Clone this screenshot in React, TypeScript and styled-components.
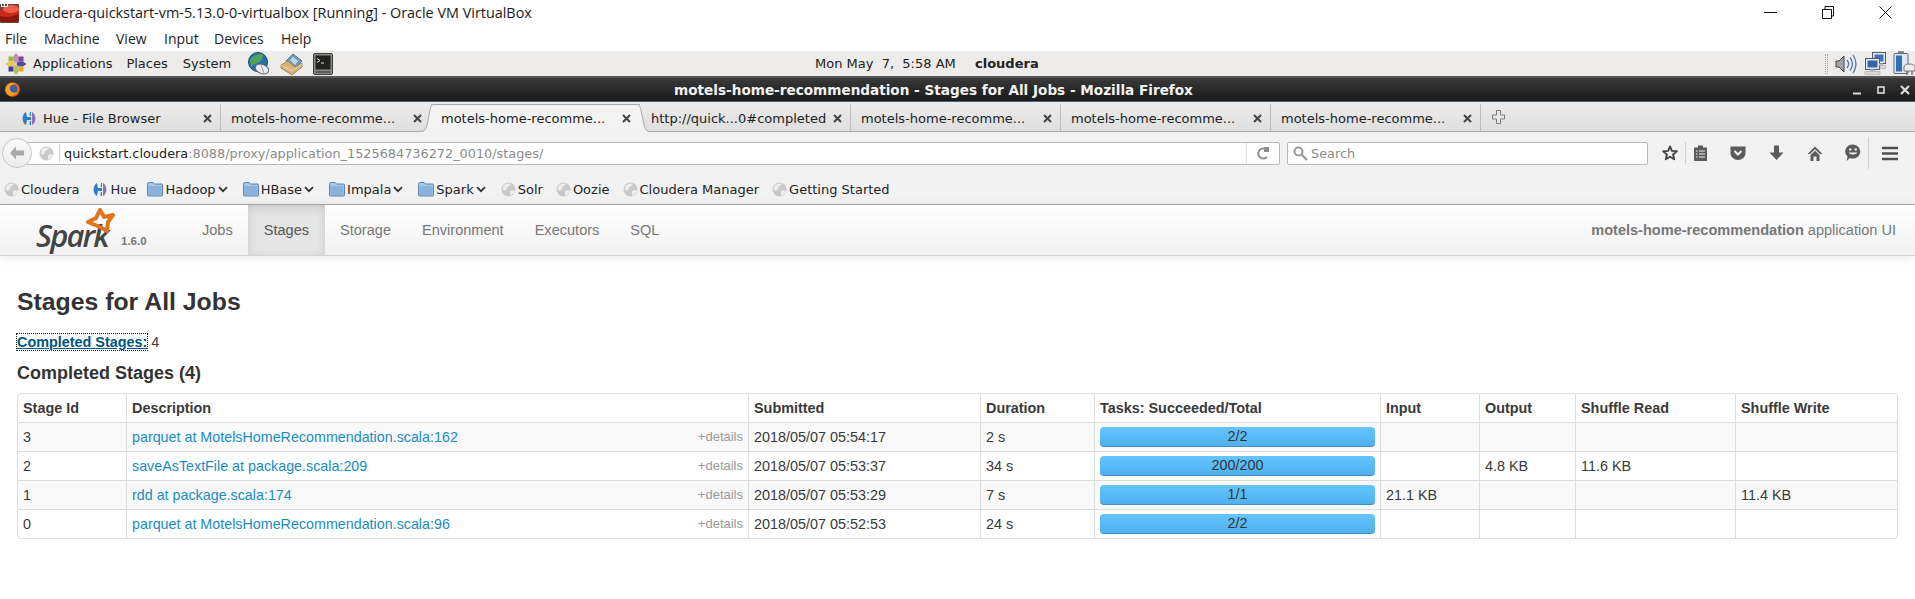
import React from 'react';
import styled, { createGlobalStyle } from 'styled-components';

const GlobalStyle = createGlobalStyle`
  html, body {
    margin: 0;
    padding: 0;
    background: #fff;
  }
`;

const Screen = styled.div`
  width: 1915px;
  height: 599px;
  overflow: hidden;
  display: flex;
  flex-direction: column;
  background: #fff;
`;

/* ---------- VirtualBox host window ---------- */

const HostTitle = styled.div`
  height: 25px;
  display: flex;
  align-items: center;
  font: 14.4px 'Open Sans', sans-serif;
  color: #1a1a1a;
`;

const HostTitleText = styled.span`
  margin-left: 5px;
  flex: 1;
`;

const HostControls = styled.div`
  display: flex;
  align-items: center;
  gap: 45px;
  margin-right: 23px;
`;

const HostMenu = styled.div`
  height: 26px;
  display: flex;
  align-items: center;
  padding-left: 5px;
  font: 14px 'Open Sans', sans-serif;
  color: #222;
`;

const HostMenuItem = styled.span<{ $w: number }>`
  width: ${(p) => p.$w}px;
`;

/* ---------- guest panel ---------- */

const Panel = styled.div`
  height: 25px;
  background: #edecea;
  display: flex;
  align-items: center;
  padding-left: 5px;
  font: 13px 'DejaVu Sans', sans-serif;
  color: #222;
`;

const PanelLeft = styled.div`
  width: 810px;
  display: flex;
  align-items: center;
`;

const PanelLabel = styled.span<{ $ml: number }>`
  margin-left: ${(p) => p.$ml}px;
`;

const PanelIcon = styled.span<{ $ml: number }>`
  margin-left: ${(p) => p.$ml}px;
  display: flex;
`;

const Clock = styled.span`
  white-space: pre;
  width: 160px;
`;

const PanelUser = styled.span`
  font-weight: bold;
  flex: 1;
`;

const Tray = styled.div`
  display: flex;
  align-items: center;
  gap: 7px;
`;

const TrayDots = styled.span`
  width: 3px;
  height: 20px;
  border-left: 1px dotted #aaa;
  border-right: 1px dotted #aaa;
  box-sizing: border-box;
`;

/* ---------- Firefox window ---------- */

const FxTitle = styled.div`
  height: 26px;
  box-sizing: border-box;
  border-top: 2px solid #555;
  border-bottom: 1px solid #4a6378;
  background: linear-gradient(#3a3a3a, #2c2c2c 40%, #1a1a1a);
  display: flex;
  align-items: center;
  padding: 0 5px;
  color: #f2f2f2;
  font: bold 13.6px 'DejaVu Sans', sans-serif;
`;

const FxTitleText = styled.span`
  flex: 1;
  text-align: center;
  margin-left: 19px;
  padding-right: 24px;
`;

const FxControls = styled.div`
  display: flex;
  align-items: center;
  gap: 14px;
`;

const TabBar = styled.div`
  height: 30px;
  box-sizing: border-box;
  background: linear-gradient(#ececec, #dfdfdf);
  border-bottom: 1px solid #a9a9a9;
  display: flex;
  padding: 2px 0 0 11px;
  font: 13px 'DejaVu Sans', sans-serif;
  color: #222;
`;

const Tab = styled.div<{ $active?: boolean; $noSep?: boolean }>`
  position: relative;
  width: 210px;
  height: ${(p) => (p.$active ? 28 : 27)}px;
  box-sizing: border-box;
  display: flex;
  align-items: center;
  padding: 1px ${(p) => (p.$active ? 9 : 8)}px 0 10px;
  border-right: 1px solid ${(p) => (p.$noSep ? 'transparent' : '#bdbdbd')};
  background: ${(p) => (p.$active ? '#f3f3f3' : 'transparent')};
  box-shadow: ${(p) => (p.$active ? 'inset 0 1px 0 #a9a9a9' : 'none')};
`;

const TabIcon = styled.span`
  display: flex;
  margin-right: 6px;
`;

const TabText = styled.span`
  flex: 1;
  white-space: nowrap;
  overflow: hidden;
`;

const TabCurve = styled.svg<{ $side: 'left' | 'right' }>`
  position: absolute;
  top: 0;
  ${(p) => (p.$side === 'left' ? 'left: -11px;' : 'right: -11px;')}
`;

const NewTab = styled.span`
  display: flex;
  align-items: center;
  margin: -2px 0 0 11px;
`;

const NavBar = styled.div`
  height: 37px;
  box-sizing: border-box;
  padding-top: 5px;
  background: #f2f2f2;
  display: flex;
  align-items: center;
  font: 12.85px 'DejaVu Sans', sans-serif;
`;

const BackButton = styled.div`
  position: relative;
  z-index: 1;
  width: 30px;
  height: 30px;
  margin-left: 2px;
  box-sizing: border-box;
  border: 1px solid #c4c4c4;
  border-radius: 50%;
  background: linear-gradient(#fbfbfb, #ececec);
  display: flex;
  align-items: center;
  justify-content: center;
`;

const UrlBox = styled.div`
  width: 1254px;
  height: 23px;
  margin-left: -6px;
  box-sizing: border-box;
  border: 1px solid #b8b8b8;
  border-radius: 0 2px 2px 0;
  background: #fff;
  display: flex;
  align-items: center;
  padding-left: 12px;
`;

const UrlDivider = styled.span`
  width: 1px;
  height: 18px;
  background: #cfcfcf;
  margin: 0 4px 0 5px;
`;

const UrlHost = styled.span`
  color: #222;
`;

const UrlRest = styled.span`
  color: #8a8a8a;
  flex: 1;
`;

const ReloadCell = styled.span`
  height: 100%;
  width: 33px;
  box-sizing: border-box;
  border-left: 1px solid #e4e4e4;
  display: flex;
  align-items: center;
  justify-content: center;
`;

const SearchBox = styled.div`
  width: 361px;
  height: 23px;
  margin-left: 7px;
  box-sizing: border-box;
  border: 1px solid #b8b8b8;
  border-radius: 2px;
  background: #fff;
  display: flex;
  align-items: center;
  gap: 3px;
  padding-left: 5px;
  color: #8a8a8a;
`;

const NavIcons = styled.div`
  display: flex;
  align-items: center;
  margin-left: 14px;
`;

const NavIcon = styled.span<{ $w: number; $ml?: number }>`
  width: ${(p) => p.$w}px;
  margin-left: ${(p) => p.$ml ?? 0}px;
  display: flex;
  justify-content: flex-start;
`;

const NavDivider = styled.span<{ $h: number; $mx: number }>`
  width: 1px;
  height: ${(p) => p.$h}px;
  margin: 0 ${(p) => p.$mx}px;
  background: #d0d0d0;
`;

const Bookmarks = styled.div`
  height: 36px;
  box-sizing: border-box;
  background: #f2f2f2;
  border-bottom: 1px solid #a9a9a9;
  display: flex;
  align-items: center;
  padding: 5px 0 0 4px;
  font: 13px 'DejaVu Sans', sans-serif;
  color: #222;
  gap: 13px;
`;

const Bookmark = styled.span`
  display: flex;
  align-items: center;
  gap: 2px;
`;

const FolderBookmark = styled(Bookmark)<{ $ml: number }>`
  margin-left: ${(p) => p.$ml}px;
  margin-right: 2px;
`;

/* ---------- Spark UI ---------- */

const SparkNav = styled.div`
  height: 51px;
  box-sizing: border-box;
  background: linear-gradient(#ffffff, #f2f2f2);
  border-bottom: 1px solid #d4d4d4;
  box-shadow: 0 1px 10px rgba(0, 0, 0, 0.1);
  display: flex;
  align-items: stretch;
  font: 14.55px 'Liberation Sans', Arial, sans-serif;
  color: #777;
`;

const Brand = styled.div`
  width: 186.5px;
  display: flex;
  align-items: flex-start;
  padding-left: 36px;
  box-sizing: border-box;
`;

const BrandLogo = styled.div`
  position: relative;
  width: 85px;
  height: 51px;
`;

const BrandWord = styled.span`
  position: absolute;
  left: 0;
  top: 11px;
  font: italic 600 31px/38px 'Open Sans', sans-serif;
  letter-spacing: -1.9px;
  color: #444;
`;

const BrandStar = styled.svg`
  position: absolute;
  left: 49px;
  top: 3px;
`;

const BrandVersion = styled.span`
  margin-top: 29px;
  font: bold 11.5px/14px 'Liberation Sans', Arial, sans-serif;
  color: #777;
`;

const NavLink = styled.a<{ $active?: boolean }>`
  padding: 0 15.5px;
  display: flex;
  align-items: center;
  color: ${(p) => (p.$active ? '#555' : '#777')};
  background: ${(p) => (p.$active ? '#e5e5e5' : 'transparent')};
  box-shadow: ${(p) => (p.$active ? 'inset 0 3px 8px rgba(0, 0, 0, 0.125)' : 'none')};
`;

const AppLabel = styled.div`
  margin-left: auto;
  margin-right: 19px;
  display: flex;
  align-items: center;
  white-space: pre;
`;

const AppName = styled.strong`
  font-weight: bold;
`;

const Content = styled.div`
  padding: 26px 19px 0 17px;
  font: 14.4px/20px 'Liberation Sans', Arial, sans-serif;
  color: #3a3a3a;
`;

const PageTitle = styled.h3`
  margin: 0;
  font: bold 24.8px/40px 'Liberation Sans', Arial, sans-serif;
  color: #333;
`;

const Summary = styled.div`
  margin-top: 10px;
  height: 20px;
`;

const SummaryLink = styled.a`
  font-weight: bold;
  color: #005580;
  text-decoration: underline;
  outline: 1px dotted #222;
`;

const SectionTitle = styled.h4`
  margin: 11px 0 0;
  font: bold 18px/20px 'Liberation Sans', Arial, sans-serif;
  color: #333;
`;

const StageTable = styled.table`
  width: 1879px;
  margin-top: 10px;
  table-layout: fixed;
  border-collapse: separate;
  border-spacing: 0;
  border: 1px solid #ddd;
  border-radius: 4px;
`;

const Col = styled.col<{ $w: number }>`
  width: ${(p) => p.$w}px;
`;

const Th = styled.th`
  height: 28px;
  box-sizing: border-box;
  padding: 0 5px;
  text-align: left;
  font-weight: bold;
  border-left: 1px solid #ddd;
  &:first-child {
    border-left: 0;
  }
`;

const Row = styled.tr<{ $odd: boolean }>`
  background: ${(p) => (p.$odd ? '#f9f9f9' : 'transparent')};
`;

const Td = styled.td`
  height: 29px;
  box-sizing: border-box;
  padding: 0 5px;
  border-left: 1px solid #ddd;
  border-top: 1px solid #ddd;
  &:first-child {
    border-left: 0;
  }
`;

const DescCell = styled.div`
  display: flex;
  justify-content: space-between;
  align-items: center;
`;

const DescLink = styled.a`
  font-size: 14.3px;
  color: #1a8cc4;
`;

const Details = styled.span`
  font-size: 13px;
  color: #999;
`;

const Bar = styled.div`
  height: 20px;
  box-sizing: border-box;
  border-radius: 4px;
  background: linear-gradient(#64c5ff, #4fb0ef);
  border-bottom: 1px solid #3f8fc6;
  text-align: center;
  line-height: 19px;
  color: #333;
`;

/* ---------- icons ---------- */

const VBoxIcon = () => (
  <svg width="19" height="20" viewBox="0 0 19 20">
    <rect x="0" y="1" width="19" height="19" rx="1" fill="#5a4a48" />
    <path d="M0 8C3 3 9 2 19 2V16C14 19 5 19 0 16Z" fill="#c9281d" />
    <ellipse cx="11" cy="6" rx="8" ry="4" fill="#e8604a" />
    <path d="M0 13C5 15 12 14 19 11V18C13 20 6 20 0 18Z" fill="#8e160e" />
    <rect x="1" y="0" width="7" height="4" fill="#eee" />
    <rect x="2" y="1" width="2" height="2" fill="#555" />
    <rect x="5" y="1" width="2" height="2" fill="#555" />
  </svg>
);

const CentosIcon = () => (
  <svg width="22" height="24" viewBox="0 0 22 24">
    <path d="M11 1L13.5 4V9L11 11.5L8.5 9V4Z" fill="#c08ac0" />
    <rect x="3.5" y="4.5" width="5" height="5" fill="#9bbb3c" />
    <rect x="13.5" y="4.5" width="5" height="5" fill="#8a3f90" />
    <path d="M0.5 12L4 9.5H9L10.5 12L9 14.5H4Z" fill="#efc25a" />
    <path d="M21.5 12L18 9.5H13L11.5 12L13 14.5H18Z" fill="#4f4c9c" />
    <rect x="3.5" y="14.5" width="5" height="5" fill="#3f3d8e" />
    <rect x="13.5" y="14.5" width="5" height="5" fill="#efa724" />
    <path d="M11 23L8.5 20V15L11 12.5L13.5 15V20Z" fill="#a8c45a" />
  </svg>
);

const GlobeMouseIcon = () => (
  <svg width="22" height="24" viewBox="0 0 22 24">
    <circle cx="10" cy="10" r="9.5" fill="#2a6ea8" />
    <path d="M2 8C6 2 11 1 16 3C13 6 15 8 11 10C9 12 6 12 3 15Z" fill="#4fa35a" />
    <circle cx="10" cy="10" r="9.5" fill="none" stroke="#1a4a78" />
    <ellipse cx="14" cy="17" rx="7" ry="4.6" fill="#ecedf0" stroke="#667" transform="rotate(20 14 17)" />
    <path d="M13 13L16 21" stroke="#99a" />
  </svg>
);

const MailIcon = () => (
  <svg width="23" height="24" viewBox="0 0 23 24">
    <path d="M6 9L13 2L22 9L15 17Z" fill="#6f9cc0" stroke="#4c5a66" strokeWidth="0.8" />
    <path d="M10 8L13 5L18 9L15 13Z" fill="#bcd6e6" />
    <path d="M1 13L8 9L15 15L22 11V15L12 23L1 16Z" fill="#d9b37a" stroke="#8f7242" strokeWidth="0.8" />
    <path d="M1 13L12 19L22 12" fill="none" stroke="#efd7ad" />
  </svg>
);

const TerminalIcon = () => (
  <svg width="20" height="22" viewBox="0 0 20 22">
    <rect x="0.5" y="0.5" width="19" height="21" rx="1.5" fill="#8a8c87" stroke="#3d3e3b" />
    <rect x="2.5" y="2.5" width="15" height="14" fill="#20221f" />
    <path d="M4 5.5L7 7.5L4 9.5M8 10H11" stroke="#ddd" fill="none" />
    <rect x="2.5" y="18" width="15" height="2" fill="#5a5b58" />
  </svg>
);

const SpeakerIcon = () => (
  <svg width="22" height="24" viewBox="0 0 22 24">
    <path d="M1 9H4L9 4V20L4 15H1Z" fill="#a4a4a4" stroke="#444" />
    <path d="M12 8C14 10.5 14 13.5 12 16M15 5.5C18 9.5 18 14.5 15 18.5M18 3C22 9 22 15 18 21" fill="none" stroke="#4a78b4" strokeWidth="1.3" />
  </svg>
);

const NetworkIcon = () => (
  <svg width="22" height="25" viewBox="0 0 22 25">
    <rect x="8.5" y="1.5" width="13" height="11" fill="#e6eaf0" stroke="#556" />
    <rect x="10.5" y="3.5" width="9" height="7" fill="#3f72b6" />
    <rect x="1.5" y="7.5" width="14" height="11" fill="#e6eaf0" stroke="#556" />
    <rect x="3.5" y="9.5" width="10" height="7" fill="#2f66ae" />
    <rect x="6" y="18.5" width="5" height="2" fill="#bbb" />
    <rect x="1" y="20.5" width="15" height="3" fill="#d9d9d9" stroke="#999" strokeWidth="0.5" />
    <rect x="15" y="12.5" width="4" height="2" fill="#bbb" />
    <rect x="16" y="14.5" width="6" height="3" fill="#d9d9d9" stroke="#999" strokeWidth="0.5" />
  </svg>
);

const BatteryIcon = () => (
  <svg width="22" height="25" viewBox="0 0 22 25">
    <rect x="5" y="0" width="6" height="3" fill="#888" />
    <rect x="1" y="2.5" width="14" height="20" rx="1" fill="#dfe6ee" stroke="#667" />
    <rect x="3" y="4.5" width="6" height="16" fill="#2f6fb8" />
    <path d="M11 20V16C11 14 13 13 16 13C19 13 22 14 22 16V20Z" fill="#eceef0" stroke="#777" />
    <path d="M14 20V24M19 20V24" stroke="#777" strokeWidth="1.5" />
  </svg>
);

const FirefoxIcon = () => (
  <svg width="15" height="15" viewBox="0 0 15 15">
    <circle cx="7.5" cy="7.5" r="7.3" fill="#e0671a" />
    <circle cx="8" cy="7" r="4.3" fill="#3f5f9e" />
    <path d="M1 5C3 1 8 0 11 2C8 2 6 3 5 5C4 9 8 12 12 10C10 14 5 15 2 12C0 10 0 7 1 5Z" fill="#f3a024" />
  </svg>
);

const HueIcon = () => (
  <svg width="16" height="15" viewBox="0 0 16 15">
    <path d="M5 1C1 3 0 11 5 14L6 9H10V6H6Z" fill="#2f7dc4" />
    <path d="M9 1L8.6 5H10V1Z" fill="#2f7dc4" />
    <path d="M10 14V10H8.8L8.5 14Z" fill="#2f7dc4" />
    <path d="M11 1C15 3 16 11 11 14Z" fill="#8e6fb4" />
  </svg>
);

const GrayGlobe = () => (
  <svg width="15" height="15" viewBox="0 0 15 15">
    <circle cx="7.5" cy="7.5" r="7" fill="#c9c9c9" />
    <path d="M3 3C5 2 8 1 10 2C9 4 7 4 6 6C6 8 4 9 2 8C2 6 2 4 3 3Z" fill="#ededed" />
    <path d="M9 9C11 8 13 8 14 9C13 12 11 13 9 14Z" fill="#ededed" />
  </svg>
);

const FolderIcon = () => (
  <svg width="16" height="16" viewBox="0 0 16 16">
    <path d="M0.5 3.5C0.5 2 1 1.5 2 1.5H6L7.5 3H14.5C15.2 3 15.5 3.4 15.5 4V14C15.5 14.8 15 15 14.5 15H1.5C1 15 0.5 14.8 0.5 14Z" fill="#a6c6e6" stroke="#5b83ad" />
    <rect x="1.5" y="5" width="13" height="9" fill="#8ab2da" />
  </svg>
);

const Chevron = () => (
  <svg width="10" height="7" viewBox="0 0 10 7">
    <path d="M1 1.2L5 5.2L9 1.2" fill="none" stroke="#333" strokeWidth="1.8" />
  </svg>
);

const CloseX = () => (
  <svg width="9" height="9" viewBox="0 0 9 9">
    <path d="M1 1L8 8M8 1L1 8" stroke="#444" strokeWidth="2" />
  </svg>
);

const PlusIcon = () => (
  <svg width="13" height="14" viewBox="0 0 13 14">
    <path d="M4.5 0.5H8.5V5H12.5V9H8.5V13.5H4.5V9H0.5V5H4.5Z" fill="#e8e8e8" stroke="#7a7a7a" />
  </svg>
);

const BackArrow = () => (
  <svg width="16" height="14" viewBox="0 0 16 14">
    <path d="M7 0.5L1 7L7 13.5V9.5H15V4.5H7Z" fill="#a9a9a9" />
  </svg>
);

const ReloadIcon = () => (
  <svg width="12" height="13" viewBox="0 0 12 13">
    <path d="M10 3.2A5 5 0 1 0 10 9.8" fill="none" stroke="#8d8d8d" strokeWidth="2" />
    <path d="M7 0V5H12V0Z" fill="#8d8d8d" />
  </svg>
);

const SearchIcon = () => (
  <svg width="15" height="15" viewBox="0 0 15 15">
    <circle cx="5.5" cy="5.5" r="4" fill="none" stroke="#9a9a9a" strokeWidth="2" />
    <path d="M8.5 8.5L14 14" stroke="#9a9a9a" strokeWidth="2.4" />
  </svg>
);

const StarIcon = () => (
  <svg width="16" height="16" viewBox="0 0 16 16">
    <path d="M8 1.5L9.9 5.9L14.8 6.3L11.1 9.5L12.2 14.3L8 11.8L3.8 14.3L4.9 9.5L1.2 6.3L6.1 5.9Z" fill="none" stroke="#444" strokeWidth="1.9" strokeLinejoin="round" />
  </svg>
);

const ReadingListIcon = () => (
  <svg width="15" height="18" viewBox="0 0 15 18">
    <path d="M1 3.5H5V1.5H10V3.5H14V17H1Z" fill="#5b5b5b" />
    <path d="M3 7H4.5M3 10H4.5M3 13H4.5M6 7H12M6 10H12M6 13H12" stroke="#f2f2f2" strokeWidth="1.2" />
  </svg>
);

const PocketIcon = () => (
  <svg width="16" height="16" viewBox="0 0 16 16">
    <path d="M0.5 1.5H15.5V8C15.5 12 12 15 8 15C4 15 0.5 12 0.5 8Z" fill="#5b5b5b" />
    <path d="M4.5 6L8 9.5L11.5 6" fill="none" stroke="#f2f2f2" strokeWidth="2" />
  </svg>
);

const DownloadIcon = () => (
  <svg width="15" height="16" viewBox="0 0 15 16">
    <path d="M5 0.5H10V7.5H14.5L7.5 15L0.5 7.5H5Z" fill="#5b5b5b" />
  </svg>
);

const HomeIcon = () => (
  <svg width="16" height="15" viewBox="0 0 16 15">
    <path d="M8 0.5L0.5 8H3L8 3.2L13 8H15.5Z" fill="#5b5b5b" />
    <path d="M3.5 9L8 4.8L12.5 9V15H9.5V10.5H6.5V15H3.5Z" fill="#5b5b5b" />
  </svg>
);

const SmileIcon = () => (
  <svg width="16" height="18" viewBox="0 0 16 18">
    <path d="M8 0.5A7.5 7 0 1 1 5 14L1.5 17L2.5 12.5A7.5 7 0 0 1 8 0.5Z" fill="#5b5b5b" />
    <circle cx="5.3" cy="5.5" r="1.2" fill="#f2f2f2" />
    <circle cx="10.7" cy="5.5" r="1.2" fill="#f2f2f2" />
    <path d="M3.8 8.5H12.2C11.5 11 4.5 11 3.8 8.5Z" fill="#f2f2f2" />
  </svg>
);

const MenuIcon = () => (
  <svg width="16" height="15" viewBox="0 0 16 15">
    <path d="M1 2H15M1 7.5H15M1 13H15" stroke="#4d4d4d" strokeWidth="2.6" strokeLinecap="round" />
  </svg>
);

const HostMin = () => (
  <svg width="13" height="12" viewBox="0 0 13 12">
    <path d="M0 5.5H13" stroke="#111" />
  </svg>
);

const HostRestore = () => (
  <svg width="12" height="13" viewBox="0 0 12 13">
    <path d="M0.5 3.5H9.5V12.5H0.5Z M3 3.5V0.5H11.5V10H9.5" fill="none" stroke="#111" />
  </svg>
);

const HostClose = () => (
  <svg width="13" height="13" viewBox="0 0 13 13">
    <path d="M0.5 0.5L12.5 12.5M12.5 0.5L0.5 12.5" stroke="#111" />
  </svg>
);

const WmMin = () => (
  <svg width="10" height="10" viewBox="0 0 10 10">
    <path d="M1 8.5H9" stroke="#ddd" strokeWidth="2" />
  </svg>
);

const WmMax = () => (
  <svg width="10" height="10" viewBox="0 0 10 10">
    <rect x="2" y="2" width="6" height="6" fill="none" stroke="#ddd" strokeWidth="1.6" />
  </svg>
);

const WmClose = () => (
  <svg width="10" height="10" viewBox="0 0 10 10">
    <path d="M1 1L9 9M9 1L1 9" stroke="#ddd" strokeWidth="2.2" />
  </svg>
);

/* ---------- data ---------- */

const tabs = [
  'motels-home-recomme...',
  'motels-home-recomme...',
  'http://quick...0#completed',
  'motels-home-recomme...',
  'motels-home-recomme...',
  'motels-home-recomme...',
];

const columns = [
  { name: 'Stage Id', width: 108 },
  { name: 'Description', width: 622 },
  { name: 'Submitted', width: 232 },
  { name: 'Duration', width: 114 },
  { name: 'Tasks: Succeeded/Total', width: 286 },
  { name: 'Input', width: 99 },
  { name: 'Output', width: 96 },
  { name: 'Shuffle Read', width: 160 },
  { name: 'Shuffle Write', width: 162 },
];

const stages = [
  { id: 3, desc: 'parquet at MotelsHomeRecommendation.scala:162', at: '2018/05/07 05:54:17', dur: '2 s', tasks: '2/2', input: '', output: '', read: '', write: '' },
  { id: 2, desc: 'saveAsTextFile at package.scala:209', at: '2018/05/07 05:53:37', dur: '34 s', tasks: '200/200', input: '', output: '4.8 KB', read: '11.6 KB', write: '' },
  { id: 1, desc: 'rdd at package.scala:174', at: '2018/05/07 05:53:29', dur: '7 s', tasks: '1/1', input: '21.1 KB', output: '', read: '', write: '11.4 KB' },
  { id: 0, desc: 'parquet at MotelsHomeRecommendation.scala:96', at: '2018/05/07 05:52:53', dur: '24 s', tasks: '2/2', input: '', output: '', read: '', write: '' },
];

const navItems = ['Jobs', 'Stages', 'Storage', 'Environment', 'Executors', 'SQL'];

const folders = ['Hadoop', 'HBase', 'Impala', 'Spark'];

export default function App() {
  return (
    <Screen>
      <GlobalStyle />
      <HostTitle>
        <VBoxIcon />
        <HostTitleText>cloudera-quickstart-vm-5.13.0-0-virtualbox [Running] - Oracle VM VirtualBox</HostTitleText>
        <HostControls>
          <HostMin />
          <HostRestore />
          <HostClose />
        </HostControls>
      </HostTitle>
      <HostMenu>
        <HostMenuItem $w={39}>File</HostMenuItem>
        <HostMenuItem $w={72}>Machine</HostMenuItem>
        <HostMenuItem $w={48}>View</HostMenuItem>
        <HostMenuItem $w={50}>Input</HostMenuItem>
        <HostMenuItem $w={67}>Devices</HostMenuItem>
        <HostMenuItem $w={40}>Help</HostMenuItem>
      </HostMenu>

      <Panel>
        <PanelLeft>
          <CentosIcon />
          <PanelLabel $ml={6}>Applications</PanelLabel>
          <PanelLabel $ml={14}>Places</PanelLabel>
          <PanelLabel $ml={15}>System</PanelLabel>
          <PanelIcon $ml={17}>
            <GlobeMouseIcon />
          </PanelIcon>
          <PanelIcon $ml={10}>
            <MailIcon />
          </PanelIcon>
          <PanelIcon $ml={10}>
            <TerminalIcon />
          </PanelIcon>
        </PanelLeft>
        <Clock>{'Mon May  7,  5:58 AM'}</Clock>
        <PanelUser>cloudera</PanelUser>
        <Tray>
          <TrayDots />
          <SpeakerIcon />
          <NetworkIcon />
          <BatteryIcon />
        </Tray>
      </Panel>

      <FxTitle>
        <FirefoxIcon />
        <FxTitleText>motels-home-recommendation - Stages for All Jobs - Mozilla Firefox</FxTitleText>
        <FxControls>
          <WmMin />
          <WmMax />
          <WmClose />
        </FxControls>
      </FxTitle>

      <TabBar>
        <Tab>
          <TabIcon>
            <HueIcon />
          </TabIcon>
          <TabText>Hue - File Browser</TabText>
          <CloseX />
        </Tab>
        {tabs.map((title, i) => (
          <Tab key={i} $active={i === 1} $noSep={i === 0 || i === 1}>
            {i === 1 && (
              <TabCurve $side="left" width="14" height="29" viewBox="0 0 14 29">
                <path d="M0 28C5 28 6 25 7 21L10 6C11 2 12 0 14 0V29H0Z" fill="#f3f3f3" />
                <path d="M0 27.5C5 27.5 6 25 7 21L10 6C11 2 12 .5 14 .5" fill="none" stroke="#a9a9a9" />
              </TabCurve>
            )}
            <TabText>{title}</TabText>
            <CloseX />
            {i === 1 && (
              <TabCurve $side="right" width="14" height="29" viewBox="0 0 14 29">
                <path d="M14 28C9 28 8 25 7 21L4 6C3 2 2 0 0 0V29H14Z" fill="#f3f3f3" />
                <path d="M14 27.5C9 27.5 8 25 7 21L4 6C3 2 2 .5 0 .5" fill="none" stroke="#a9a9a9" />
              </TabCurve>
            )}
          </Tab>
        ))}
        <NewTab>
          <PlusIcon />
        </NewTab>
      </TabBar>

      <NavBar>
        <BackButton>
          <BackArrow />
        </BackButton>
        <UrlBox>
          <GrayGlobe />
          <UrlDivider />
          <UrlHost>quickstart.cloudera</UrlHost>
          <UrlRest>:8088/proxy/application_1525684736272_0010/stages/</UrlRest>
          <ReloadCell>
            <ReloadIcon />
          </ReloadCell>
        </UrlBox>
        <SearchBox>
          <SearchIcon />
          Search
        </SearchBox>
        <NavIcons>
          <StarIcon />
          <NavDivider $h={22} $mx={7} />
          <NavIcon $w={37}>
            <ReadingListIcon />
          </NavIcon>
          <NavIcon $w={39}>
            <PocketIcon />
          </NavIcon>
          <NavIcon $w={38}>
            <DownloadIcon />
          </NavIcon>
          <NavIcon $w={38}>
            <HomeIcon />
          </NavIcon>
          <NavIcon $w={23}>
            <SmileIcon />
          </NavIcon>
          <NavDivider $h={32} $mx={0} />
          <NavIcon $w={16} $ml={13}>
            <MenuIcon />
          </NavIcon>
        </NavIcons>
      </NavBar>

      <Bookmarks>
        <Bookmark>
          <GrayGlobe />
          Cloudera
        </Bookmark>
        <Bookmark>
          <HueIcon />
          Hue
        </Bookmark>
        {folders.map((f, i) => (
          <FolderBookmark key={f} $ml={i === 0 ? -2 : 0}>
            <FolderIcon />
            {f}
            <Chevron />
          </FolderBookmark>
        ))}
        <Bookmark>
          <GrayGlobe />
          Solr
        </Bookmark>
        <Bookmark>
          <GrayGlobe />
          Oozie
        </Bookmark>
        <Bookmark>
          <GrayGlobe />
          Cloudera Manager
        </Bookmark>
        <Bookmark>
          <GrayGlobe />
          Getting Started
        </Bookmark>
      </Bookmarks>

      <SparkNav>
        <Brand>
          <BrandLogo>
            <BrandWord>Spark</BrandWord>
            <BrandStar width="30" height="28" viewBox="0 0 30 28">
              <path d="M15 2L19 9L28 7L23 14L22 23L15 19L3 14L11 10Z" fill="none" stroke="#e0761c" strokeWidth="4" strokeLinejoin="round" />
            </BrandStar>
          </BrandLogo>
          <BrandVersion>1.6.0</BrandVersion>
        </Brand>
        {navItems.map((n) => (
          <NavLink key={n} $active={n === 'Stages'}>
            {n}
          </NavLink>
        ))}
        <AppLabel>
          <AppName>motels-home-recommendation</AppName> application UI
        </AppLabel>
      </SparkNav>

      <Content>
        <PageTitle>Stages for All Jobs</PageTitle>
        <Summary>
          <SummaryLink>Completed Stages:</SummaryLink> 4
        </Summary>
        <SectionTitle>Completed Stages (4)</SectionTitle>
        <StageTable>
          <colgroup>
            {columns.map((c) => (
              <Col key={c.name} $w={c.width} />
            ))}
          </colgroup>
          <thead>
            <tr>
              {columns.map((c) => (
                <Th key={c.name}>{c.name}</Th>
              ))}
            </tr>
          </thead>
          <tbody>
            {stages.map((s, i) => (
              <Row key={s.id} $odd={i % 2 === 0}>
                <Td>{s.id}</Td>
                <Td>
                  <DescCell>
                    <DescLink>{s.desc}</DescLink>
                    <Details>+details</Details>
                  </DescCell>
                </Td>
                <Td>{s.at}</Td>
                <Td>{s.dur}</Td>
                <Td>
                  <Bar>{s.tasks}</Bar>
                </Td>
                <Td>{s.input}</Td>
                <Td>{s.output}</Td>
                <Td>{s.read}</Td>
                <Td>{s.write}</Td>
              </Row>
            ))}
          </tbody>
        </StageTable>
      </Content>
    </Screen>
  );
}
